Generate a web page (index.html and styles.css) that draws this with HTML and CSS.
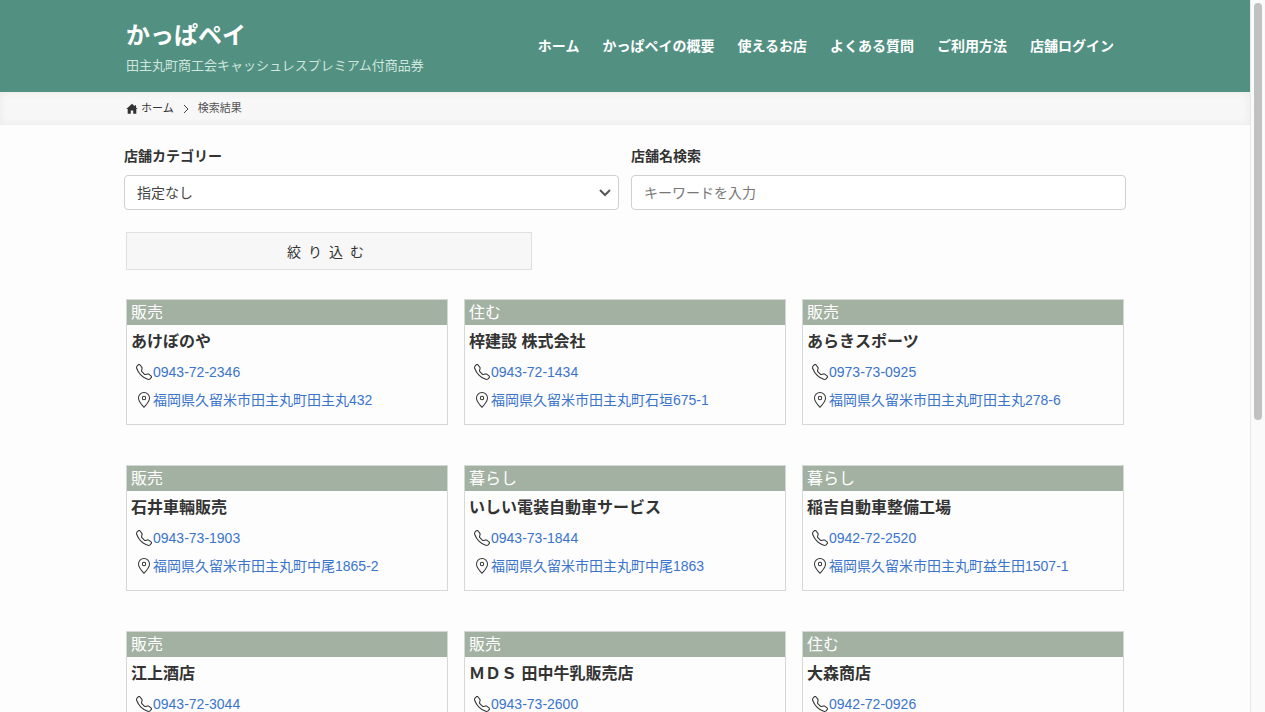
FILE: index.html
```html
<!DOCTYPE html>
<html lang="ja">
<head>
    <meta charset="UTF-8">
    <meta name="viewport" content="width=device-width, initial-scale=1.0">
    <title>検索結果 | かっぱペイ</title>
    <link rel="stylesheet" href="styles.css">
</head>
<body>
    <svg class="symbols" aria-hidden="true">
        <symbol id="tel" viewBox="0 0 16 16">
            <path d="M3.654 1.328a.678.678 0 0 0-1.015-.063L1.605 2.3c-.483.484-.661 1.169-.45 1.77a17.6 17.6 0 0 0 4.168 6.608 17.6 17.6 0 0 0 6.608 4.168c.601.211 1.286.033 1.77-.45l1.034-1.034a.678.678 0 0 0-.063-1.015l-2.307-1.794a.68.68 0 0 0-.58-.122l-2.19.547a1.75 1.75 0 0 1-1.657-.459L5.482 8.062a1.75 1.75 0 0 1-.46-1.657l.548-2.19a.68.68 0 0 0-.122-.58zM1.884.511a1.745 1.745 0 0 1 2.612.163L6.29 2.98c.329.423.445.974.315 1.494l-.547 2.19a.68.68 0 0 0 .178.643l2.457 2.457a.68.68 0 0 0 .644.178l2.189-.547a1.75 1.75 0 0 1 1.494.315l2.306 1.794c.829.645.905 1.87.163 2.611l-1.034 1.034c-.74.74-1.846 1.065-2.877.702a18.6 18.6 0 0 1-7.01-4.42 18.6 18.6 0 0 1-4.42-7.009c-.362-1.03-.037-2.137.703-2.877z"/>
        </symbol>
        <symbol id="pin" viewBox="0 0 16 16">
            <path d="M12.166 8.94c-.524 1.062-1.234 2.12-1.96 3.07A32 32 0 0 1 8 14.58a32 32 0 0 1-2.206-2.57c-.726-.95-1.436-2.008-1.96-3.07C3.304 7.867 3 6.862 3 6a5 5 0 0 1 10 0c0 .862-.305 1.867-.834 2.94M8 16s6-5.686 6-10A6 6 0 0 0 2 6c0 4.314 6 10 6 10"/>
            <path d="M8 7.2a1.2 1.2 0 1 1 0-2.4 1.2 1.2 0 0 1 0 2.4m0 1a2.2 2.2 0 1 0 0-4.4 2.2 2.2 0 0 0 0 4.4"/>
        </symbol>
    </svg>

    <div class="window">
        <div class="page">
            <header class="header">
                <div class="container header-inner">
                    <div class="brand">
                        <a href="#" class="site-title">かっぱペイ</a>
                        <p class="tagline">田主丸町商工会キャッシュレスプレミアム付商品券</p>
                    </div>
                    <nav class="nav">
                        <a href="#">ホーム</a>
                        <a href="#">かっぱペイの概要</a>
                        <a href="#">使えるお店</a>
                        <a href="#">よくある質問</a>
                        <a href="#">ご利用方法</a>
                        <a href="#">店舗ログイン</a>
                    </nav>
                </div>
            </header>

            <div class="breadcrumb">
                <div class="container breadcrumb-inner">
                    <a href="#" class="crumb-home">
                        <svg class="icon-home" viewBox="0 0 12 12"><path d="M6 .8.3 6.1h1.4v4.6h3.1V7.6h2.4v3.1h3.1V6.1h1.4L10 4.5V2.2H8.700v1.100z"/></svg>
                        <span>ホーム</span>
                    </a>
                    <svg class="icon-next" viewBox="0 0 6 10"><path d="m1 1 4 4-4 4"/></svg>
                    <span class="crumb-current">検索結果</span>
                </div>
            </div>

            <main class="container">
                <form class="search">
                    <div class="field">
                        <label for="category">店舗カテゴリー</label>
                        <div class="select-wrap">
                            <select id="category">
                                <option>指定なし</option>
                                <option>販売</option>
                                <option>住む</option>
                                <option>暮らし</option>
                            </select>
                            <svg class="icon-down" viewBox="0 0 12 8"><path d="m1 1 5 5 5-5"/></svg>
                        </div>
                    </div>
                    <div class="field">
                        <label for="keyword">店舗名検索</label>
                        <input type="text" id="keyword" placeholder="キーワードを入力">
                    </div>
                    <button type="submit" class="submit">絞り込む</button>
                </form>

                <div class="shops">
                    <article class="shop">
                        <p class="shop-category">販売</p>
                        <h2>あけぼのや</h2>
                        <p class="shop-line"><svg><use href="#tel"/></svg><a href="#">0943-72-2346</a></p>
                        <p class="shop-line"><svg><use href="#pin"/></svg><a href="#">福岡県久留米市田主丸町田主丸432</a></p>
                    </article>
                    <article class="shop">
                        <p class="shop-category">住む</p>
                        <h2>梓建設 株式会社</h2>
                        <p class="shop-line"><svg><use href="#tel"/></svg><a href="#">0943-72-1434</a></p>
                        <p class="shop-line"><svg><use href="#pin"/></svg><a href="#">福岡県久留米市田主丸町石垣675-1</a></p>
                    </article>
                    <article class="shop">
                        <p class="shop-category">販売</p>
                        <h2>あらきスポーツ</h2>
                        <p class="shop-line"><svg><use href="#tel"/></svg><a href="#">0973-73-0925</a></p>
                        <p class="shop-line"><svg><use href="#pin"/></svg><a href="#">福岡県久留米市田主丸町田主丸278-6</a></p>
                    </article>
                    <article class="shop">
                        <p class="shop-category">販売</p>
                        <h2>石井車輛販売</h2>
                        <p class="shop-line"><svg><use href="#tel"/></svg><a href="#">0943-73-1903</a></p>
                        <p class="shop-line"><svg><use href="#pin"/></svg><a href="#">福岡県久留米市田主丸町中尾1865-2</a></p>
                    </article>
                    <article class="shop">
                        <p class="shop-category">暮らし</p>
                        <h2>いしい電装自動車サービス</h2>
                        <p class="shop-line"><svg><use href="#tel"/></svg><a href="#">0943-73-1844</a></p>
                        <p class="shop-line"><svg><use href="#pin"/></svg><a href="#">福岡県久留米市田主丸町中尾1863</a></p>
                    </article>
                    <article class="shop">
                        <p class="shop-category">暮らし</p>
                        <h2>稲吉自動車整備工場</h2>
                        <p class="shop-line"><svg><use href="#tel"/></svg><a href="#">0942-72-2520</a></p>
                        <p class="shop-line"><svg><use href="#pin"/></svg><a href="#">福岡県久留米市田主丸町益生田1507-1</a></p>
                    </article>
                    <article class="shop">
                        <p class="shop-category">販売</p>
                        <h2>江上酒店</h2>
                        <p class="shop-line"><svg><use href="#tel"/></svg><a href="#">0943-72-3044</a></p>
                    </article>
                    <article class="shop">
                        <p class="shop-category">販売</p>
                        <h2>ＭＤＳ 田中牛乳販売店</h2>
                        <p class="shop-line"><svg><use href="#tel"/></svg><a href="#">0943-73-2600</a></p>
                    </article>
                    <article class="shop">
                        <p class="shop-category">住む</p>
                        <h2>大森商店</h2>
                        <p class="shop-line"><svg><use href="#tel"/></svg><a href="#">0942-72-0926</a></p>
                    </article>
                </div>
            </main>
        </div>
        <div class="scrollbar" aria-hidden="true">
            <div class="scrollbar-thumb"></div>
        </div>
    </div>
</body>
</html>
```
FILE: styles.css
```css
* {
    box-sizing: border-box;
}

body {
    margin: 0;
    font-family: "Liberation Sans", "Noto Sans CJK JP", sans-serif;
    font-size: 14px;
    color: #333;
    background-color: #fdfdfd;
}

a {
    text-decoration: none;
}

p, h2 {
    margin: 0;
}

.symbols {
    display: none;
}

.window {
    display: flex;
    height: 100vh;
}

.page {
    flex: 1;
    min-width: 0;
    overflow: hidden;
}

.scrollbar {
    width: 15px;
    padding: 3px 3px 3px 3px;
    background-color: #fafafa;
    border-left: 1px solid #e8e8e8;
}

.scrollbar-thumb {
    height: 59%;
    border-radius: 4px;
    background-color: #c1c1c1;
}

.container {
    max-width: 1002px;
    margin: 0 auto;
}

/* header */
.header {
    background-color: #529082;
    color: #fff;
}

.header-inner {
    display: flex;
    align-items: center;
    justify-content: space-between;
    padding: 16px 12px 16px 2px;
}

.site-title {
    display: block;
    font-size: 24px;
    font-weight: bold;
    line-height: 40px;
    color: #fff;
}

.tagline {
    font-size: 13px;
    line-height: 20px;
    color: #cfe6dc;
}

.nav {
    display: flex;
    gap: 23px;
}

.nav a {
    font-weight: bold;
    line-height: 20px;
    color: #fff;
}

/* breadcrumb */
.breadcrumb {
    background-color: #f7f7f7;
    box-shadow: inset 0 0 8px rgba(0, 0, 0, 0.06);
}

.breadcrumb-inner {
    display: flex;
    align-items: center;
    gap: 9px;
    padding: 8px 2px;
    font-size: 11px;
    line-height: 17px;
}

.crumb-home {
    display: flex;
    align-items: center;
    gap: 3px;
    color: #333;
}

.crumb-current {
    color: #555;
}

.icon-home {
    width: 12px;
    height: 12px;
    fill: #333;
}

.icon-next {
    width: 6px;
    height: 10px;
    fill: none;
    stroke: #444;
}

/* search form */
.search {
    display: grid;
    grid-template-columns: 1fr 1fr;
    gap: 22px 12px;
    padding: 20px 0 29px;
}

.field label {
    display: block;
    margin-bottom: 8px;
    font-weight: bold;
    line-height: 22px;
}

.field input,
.field select {
    display: block;
    width: 100%;
    height: 35px;
    padding: 0 12px;
    font: inherit;
    color: #444;
    background-color: #fff;
    border: 1px solid #d0d0d0;
    border-radius: 4px;
    appearance: none;
}

.field input::placeholder {
    color: #777;
}

.select-wrap {
    position: relative;
}

.icon-down {
    position: absolute;
    top: 14px;
    right: 8px;
    width: 12px;
    height: 8px;
    fill: none;
    stroke: #555;
    stroke-width: 2;
    pointer-events: none;
}

.submit {
    grid-column: 1 / -1;
    width: 100%;
    max-width: 406px;
    height: 38px;
    margin: 0 2px;
    font: inherit;
    letter-spacing: 7px;
    color: #333;
    background-color: #f7f7f7;
    border: 1px solid #e0e0e0;
}

/* shop list */
.shops {
    display: grid;
    grid-template-columns: repeat(3, 1fr);
    gap: 40px 16px;
    padding: 0 2px;
}

.shop {
    padding-bottom: 10px;
    border: 1px solid #d5d9d5;
}

.shop-category {
    padding: 0 4px;
    font-size: 16px;
    line-height: 25px;
    color: #fff;
    background-color: #a2b1a2;
}

.shop h2 {
    padding: 0 4px;
    font-size: 16px;
    line-height: 33px;
}

.shop-line {
    display: flex;
    align-items: center;
    gap: 1px;
    padding-left: 9px;
    line-height: 28px;
}

.shop-line svg {
    width: 16px;
    height: 16px;
    fill: #333;
}

.shop-line a {
    color: #3a74cd;
}

@media (max-width: 800px) {
    .search,
    .shops {
        grid-template-columns: 1fr;
    }
}
```
